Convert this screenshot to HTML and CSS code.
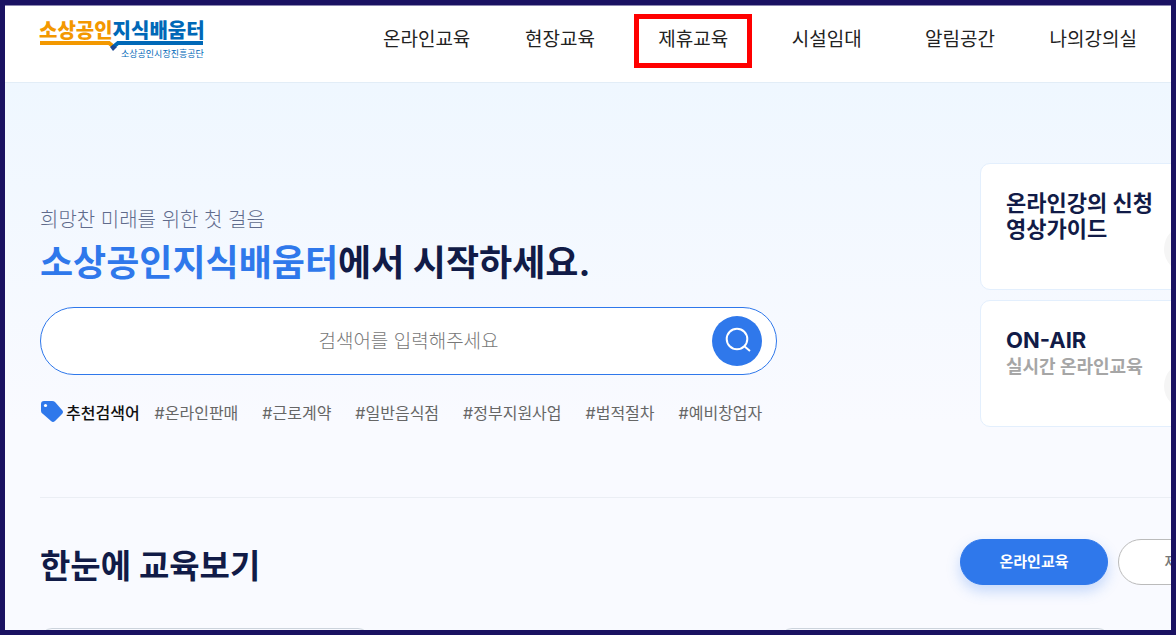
FILE: index.html
```html
<!DOCTYPE html>
<html lang="ko">
<head>
<meta charset="utf-8">
<title>소상공인지식배움터</title>
<link rel="stylesheet" href="styles.css">
</head>
<body>
<div class="frame">
  <header class="header">
    <a class="logo" href="#" aria-label="소상공인지식배움터">
      <svg width="172" height="54" viewBox="-2 -6 172 54">
        <text class="logo-name" x="-1" y="18"><tspan fill="#f39800">소상공인</tspan><tspan fill="#0068b7">지식배움터</tspan></text>
        <path d="M0 23h69l6 5" fill="none" stroke="#f39800" stroke-width="4"/>
        <path d="M163 23H78l-6 5" fill="none" stroke="#0068b7" stroke-width="4"/>
        <path d="M70 27l3-2 4 2-4 4z" fill="#1b4793"/>
        <text class="logo-org" x="81" y="37" fill="#0068b7">소상공인시장진흥공단</text>
      </svg>
    </a>
    <nav class="nav">
      <a href="#">온라인교육</a>
      <a href="#">현장교육</a>
      <a href="#" class="marked">제휴교육</a>
      <a href="#">시설임대</a>
      <a href="#">알림공간</a>
      <a href="#">나의강의실</a>
    </nav>
  </header>
  <main class="main">
    <section class="hero">
      <div class="intro">
        <p class="lead">희망찬 미래를 위한 첫 걸음</p>
        <h1 class="title"><span class="accent">소상공인지식배움터</span>에서 시작하세요.</h1>
        <form class="search">
          <input class="search-input" type="text" placeholder="검색어를 입력해주세요" aria-label="검색어">
          <button class="search-button" type="button" aria-label="검색">
            <svg width="28" height="28" viewBox="0 0 28 28" fill="none" stroke="#fff" stroke-width="2"><circle cx="14" cy="12" r="10.3"/><path d="M21 19l6 5"/></svg>
          </button>
        </form>
        <div class="tags">
          <strong class="tags-label">
            <svg width="24" height="24" viewBox="0 0 24 24"><path d="M4 1h8q2 0 3 1l7 8q2 2 0 4l-7 7q-2 2-4 0l-8-7q-2-1-2-3V4q0-3 3-3z" fill="#2f78eb"/><circle cx="5.500" cy="5.500" r="1.600" fill="#fff"/></svg>
            추천검색어
          </strong>
          <a href="#">#온라인판매</a>
          <a href="#">#근로계약</a>
          <a href="#">#일반음식점</a>
          <a href="#">#정부지원사업</a>
          <a href="#">#법적절차</a>
          <a href="#">#예비창업자</a>
        </div>
      </div>
      <div class="cards">
        <a class="card" href="#">
          <span class="card-text">
            <strong class="card-title">온라인강의 신청</strong>
            <strong class="card-title">영상가이드</strong>
          </span>
          <span class="card-dot"></span>
        </a>
        <a class="card" href="#">
          <span class="card-text">
            <strong class="card-title">ON-AIR</strong>
            <span class="card-sub">실시간 온라인교육</span>
          </span>
          <span class="card-dot"></span>
        </a>
      </div>
    </section>
    <section class="overview">
      <div class="overview-head">
        <h2 class="overview-title">한눈에 교육보기</h2>
        <div class="filters">
          <button class="filter active" type="button">온라인교육</button>
          <button class="filter" type="button">제휴교육</button>
          <button class="filter" type="button">현장교육</button>
        </div>
      </div>
      <div class="tiles">
        <div class="tile"></div>
        <div class="tile plain"></div>
        <div class="tile"></div>
        <div class="tile plain"></div>
      </div>
    </section>
  </main>
</div>
</body>
</html>
```
FILE: styles.css
```css
* {
  box-sizing: border-box;
}

body {
  margin: 0;
  font-family: Inter, "Noto Sans CJK KR", sans-serif;
  color: #111b47;
}

a {
  color: inherit;
  text-decoration: none;
}

.frame {
  height: 100vh;
  overflow: hidden;
  border: 5px solid #1a1262;
  background: #f9faff;
}

.header {
  display: flex;
  justify-content: space-between;
  height: 78px;
  padding: 0 11px 0 33px;
  background: #fff;
  border-bottom: 1px solid #e2edf7;
  box-shadow: inset 0 1px #8d89b1;
}

.logo {
  padding-top: 9px;
}

.logo svg {
  display: block;
}

.logo-name {
  font-size: 20px;
  font-weight: 900;
}

.logo-org {
  font-size: 9px;
  font-weight: 400;
}

.nav {
  display: grid;
  grid-template-columns: repeat(6, 1fr);
  flex: 0 1 800px;
}

.nav a {
  position: relative;
  font-size: 19px;
  line-height: 28px;
  padding-top: 21px;
  text-align: center;
  color: #222;
}

.marked::after {
  content: "";
  position: absolute;
  inset: 9px 8px 14px 7px;
  border: 5px solid #f00;
}

.main {
  height: 100%;
  padding-left: 35px;
  background: linear-gradient(#eff7ff, #f9faff 340px);
}

.hero {
  display: flex;
  width: 1400px;
  height: 415px;
  border-bottom: 1px solid #ebeef4;
}

.intro {
  flex: 0 0 940px;
  padding-top: 121px;
}

.lead {
  margin: 0;
  font-size: 20px;
  font-weight: 300;
  line-height: 32px;
  color: #5f6b8c;
}

.title {
  margin: 0;
  font-size: 36px;
  font-weight: 700;
  line-height: 54px;
}

.accent {
  color: #2f78eb;
}

.search {
  display: flex;
  align-items: center;
  width: 737px;
  height: 68px;
  margin-top: 17px;
  padding: 0 14px 0 64px;
  border: 1px solid #2f78eb;
  border-radius: 34px;
  background: #fff;
}

.search-input {
  flex: 1;
  min-width: 0;
  height: 50px;
  padding: 0;
  border: 0;
  outline: 0;
  background: none;
  font: 300 19px Inter, "Noto Sans CJK KR", sans-serif;
  text-align: center;
  color: #222;
}

.search-input::placeholder {
  color: #777;
}

.search-button {
  display: grid;
  place-items: center;
  width: 50px;
  height: 50px;
  padding: 0;
  border: 0;
  border-radius: 50%;
  background: #2f78eb;
}

.tags {
  display: flex;
  align-items: center;
  gap: 24px;
  margin-top: 25px;
  font-size: 16px;
  line-height: 26px;
  color: #666;
}

.tags-label {
  display: flex;
  gap: 2px;
  margin-right: -9px;
  font-weight: 500;
  color: #111;
}

.cards {
  display: flex;
  flex: 1;
  flex-direction: column;
  gap: 10px;
  padding-top: 80px;
}

.card {
  display: flex;
  justify-content: space-between;
  width: 260px;
  height: 127px;
  padding: 26px 27px 0 25px;
  border: 1px solid #e3effd;
  border-radius: 10px;
  background: #fff;
}

.card-title {
  display: block;
  font-size: 22px;
  font-weight: 700;
  line-height: 26px;
}

.card-sub {
  display: block;
  font-size: 18px;
  font-weight: 700;
  line-height: 28px;
  color: #a6a6a6;
}

.card-dot {
  width: 48px;
  height: 48px;
  margin-top: 35px;
  border-radius: 50%;
  background: #f5f5f5;
}

.overview {
  width: 1480px;
}

.overview-head {
  display: flex;
  align-items: flex-start;
  padding-top: 41px;
}

.overview-title {
  flex: 0 0 920px;
  margin: 0;
  font-size: 33px;
  font-weight: 700;
  line-height: 54px;
}

.filters {
  display: flex;
  gap: 10px;
}

.filter {
  width: 148px;
  height: 46px;
  padding: 0 0 3px;
  border: 1px solid #bbb;
  border-radius: 23px;
  background: #fff;
  font: 500 15px Inter, "Noto Sans CJK KR", sans-serif;
  color: #777;
}

.active {
  border-color: #2f78eb;
  background: #2f78eb;
  box-shadow: 0 6px 14px #2f78eb44;
  font-weight: 700;
  color: #fff;
}

.tiles {
  display: grid;
  grid-template-columns: repeat(4, 330px);
  gap: 40px;
  margin-top: 35px;
}

.tile {
  height: 200px;
  border: 1px solid #ccd3dc;
  border-radius: 12px;
}

.plain {
  border-color: transparent;
}
```
